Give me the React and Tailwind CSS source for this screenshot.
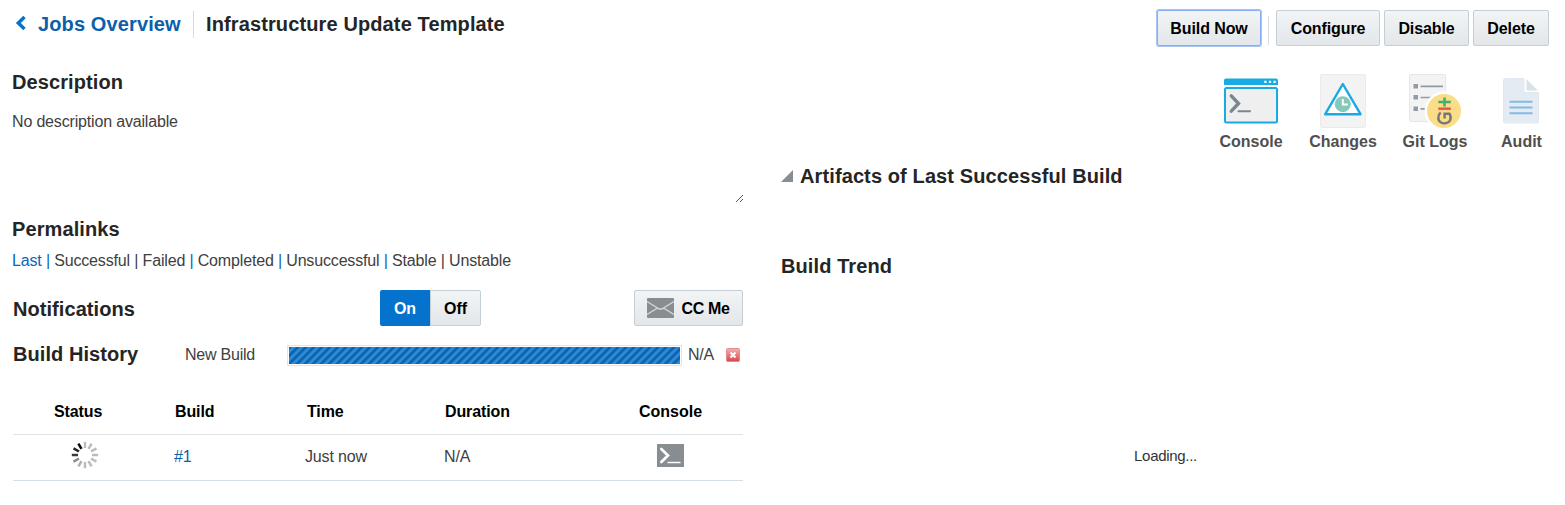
import React from "react";

const heading = "text-[20px] leading-[24px] font-bold text-[#252525] whitespace-nowrap";
const face =
  "h-[36px] flex items-center justify-center border bg-linear-to-b from-[#f2f4f5] to-[#e3e7ea] text-[16px] font-bold text-black whitespace-nowrap tracking-[-0.1px] pt-[2px]";
const edge = "border-[#c4ced7]";

function ConsoleIcon() {
  return (
    <svg width="54" height="46" viewBox="0 0 54 46">
      <path d="M2 0.500h50a2 2 0 0 1 2 2V7H0V2.500a2 2 0 0 1 2-2z" fill="#18aae2" />
      <path d="M40.300 2.700h2.200v2.200h-2.200zM44.900 2.700h2.200v2.200h-2.200zM49.500 2.700h2.200v2.200h-2.200z" fill="#fff" />
      <rect x="1" y="10" width="52" height="34.500" rx="1.500" fill="#efefef" stroke="#18aae2" strokeWidth="2" />
      <path d="M7.300 17.800l7.200 7.700-7.200 7.700" fill="none" stroke="#7b868f" strokeWidth="3.400" strokeLinecap="round" />
      <path d="M14.500 33.200h11.500" stroke="#7b868f" strokeWidth="2" strokeLinecap="round" />
    </svg>
  );
}

function ChangesIcon() {
  return (
    <svg width="46" height="54" viewBox="0 0 46 54">
      <rect x="0.500" y="0.500" width="45" height="53" rx="1.500" fill="#f3f3f3" stroke="#ebebeb" />
      <path d="M22.800 10L40.500 40.200H5.200z" fill="#fff" stroke="#18aae2" strokeWidth="2.400" strokeLinejoin="round" />
      <circle cx="22.800" cy="30.200" r="8" fill="#86c9bb" />
      <path d="M22.800 25v5.500h5" fill="none" stroke="#fff" strokeWidth="1.900" />
    </svg>
  );
}

function GitLogsIcon() {
  return (
    <svg width="53" height="55" viewBox="0 0 53 55">
      <rect x="0.500" y="0.500" width="36" height="47" rx="1" fill="#f3f3f3" stroke="#e6e6e6" />
      <path d="M4.500 10h4.500v4.500h-4.500zM4.500 21h4.500v4.500h-4.500zM4.500 32.500h4.500v4.500h-4.500z" fill="#929ba3" />
      <path d="M11.500 12.300h22.500M11.500 23.500h14M11.500 34.800h5" stroke="#929ba3" strokeWidth="1.700" />
      <circle cx="35" cy="37" r="19.500" fill="#fff" />
      <circle cx="35" cy="37" r="17" fill="#fadd86" />
      <path d="M35.500 23.500v9M29.300 28h12.500" stroke="#45af6c" strokeWidth="2.600" />
      <path d="M29.300 34.700h12.500" stroke="#ee5353" strokeWidth="2.500" />
      <path d="M31.700 38.500C28.600 41 28.300 46.500 32 48.500C35 50 39.500 49.500 41 46.500C42 44 41.800 41.500 40.500 39.700H35.600V44.500" fill="none" stroke="#767676" strokeWidth="2.400" />
    </svg>
  );
}

function AuditIcon() {
  return (
    <svg width="36" height="46" viewBox="0 0 36 46">
      <path d="M1.500 0.500H21V14.500H35.500V43.500a1.500 1.500 0 0 1-1.500 1.500H2a1.500 1.500 0 0 1-1.500-1.500V1.500z" fill="#e5ebf3" stroke="#dce4ee" strokeWidth="0.800" />
      <path d="M23.500 1L35 12.500H23.500z" fill="#d9e2eb" />
      <path d="M6.500 23.800h23M6.500 29.500h23M6.500 35.300h23" stroke="#82bbe6" strokeWidth="2" />
    </svg>
  );
}

const tools = [
  { label: "Console", icon: <ConsoleIcon />, box: "w-[64px] mr-[26px]", art: "h-[50px]" },
  { label: "Changes", icon: <ChangesIcon />, box: "w-[68px] mr-[26px]", art: "h-[54px]" },
  { label: "Git Logs", icon: <GitLogsIcon />, box: "w-[64px] mr-[34px]", art: "h-[54px]" },
  { label: "Audit", icon: <AuditIcon />, box: "w-[41px]", art: "h-[50px] pr-[2px]" },
];

const spokes = [
  "#bcbcbc", "#bcbcbc", "#bcbcbc", "#bcbcbc", "#bcbcbc", "#bcbcbc",
  "#bcbcbc", "#b0b0b0", "#8a8a8a", "#3a3a3a", "#222222", "#0a0a0a",
];

function Spinner() {
  return (
    <svg width="28" height="28" viewBox="-14 -14 28 28">
      {spokes.map((color, i) => (
        <path key={i} d="M0 -7V-13.200" stroke={color} strokeWidth="2.500" transform={`rotate(${i * 30})`} />
      ))}
    </svg>
  );
}

export default function App() {
  return (
    <div className="h-[505px] w-[1565px] overflow-hidden bg-white font-['Liberation_Sans',Arial,sans-serif] text-[16px] leading-[20px] text-[#404040]">
      <header className="flex h-[52px] justify-between pl-[15px] pr-[16px]">
        <div className="flex h-[48px] items-center">
          <svg width="12" height="16" viewBox="0 0 12 16" className="mr-[11px] -mt-[3px]">
            <path d="M9.500 2L3.300 8l6.200 6" fill="none" stroke="#0572ce" strokeWidth="3.400" />
          </svg>
          <a className="w-[155px] text-[20px] leading-[24px] font-bold whitespace-nowrap text-[#0c5fab] tracking-[0.12px]">Jobs Overview</a>
          <div className="h-[27px] w-px bg-[#d6dbdf]" />
          <h1 className={`${heading} ml-[12px] tracking-[0.12px]`}>Infrastructure Update Template</h1>
        </div>
        <div className="flex items-start pt-[10px]">
          <button className={`${face} w-[104px] rounded-[2px] border-[#87aef0] shadow-[0_0_0_1px_#a5c5f7]`}>Build Now</button>
          <div className="mx-[7px] mt-[6px] h-[29px] w-px bg-[#d6dfe6]" />
          <button className={`${face} ${edge} w-[104px] rounded-[2px]`}>Configure</button>
          <button className={`${face} ${edge} ml-[4px] w-[85px] rounded-[2px]`}>Disable</button>
          <button className={`${face} ${edge} ml-[4px] w-[76px] rounded-[2px]`}>Delete</button>
        </div>
      </header>

      <div className="flex pl-[12px] pr-[16px]">
        <main className="w-[731px]">
          <section className="h-[152px] pt-[18px]">
            <h2 className={`${heading} tracking-[0.1px]`}>Description</h2>
            <div className="mt-[18px] flex h-[92px] justify-between">
              <p className="tracking-[-0.17px]">No description available</p>
              <svg width="8" height="8" viewBox="0 0 8 8" shapeRendering="crispEdges" className="mt-[82px] self-start">
                <path d="M1 7h1v1h-1zM2 6h1v1h-1zM3 5h1v1h-1zM4 4h1v1h-1zM5 3h1v1h-1zM6 2h1v1h-1zM7 1h1v1h-1zM5 7h1v1h-1zM6 6h1v1h-1zM7 5h1v1h-1z" fill="#555" />
              </svg>
            </div>
          </section>

          <section className="h-[86px] pt-[13px]">
            <h2 className={`${heading} tracking-[0.1px]`}>Permalinks</h2>
            <p className="mt-[10px] whitespace-nowrap tracking-[-0.16px]">
              <a className="text-[#0c66b4]">Last</a> <span className="text-[#0c66b4]">|</span> Successful | Failed <span className="text-[#0c66b4]">|</span> Completed <span className="text-[#0c66b4]">|</span> Unsuccessful <span className="text-[#0c66b4]">|</span> Stable | Unstable
            </p>
          </section>

          <section className="flex h-[36px] items-center">
            <h2 className={`${heading} ml-px w-[367px] pt-[2px] tracking-[0.06px]`}>Notifications</h2>
            <div className="flex w-[254px]">
              <button className="h-[36px] w-[50px] rounded-l-[2px] bg-[#0572ce] pt-[2px] font-bold text-white">On</button>
              <button className={`${face} ${edge} w-[51px] rounded-r-[2px]`}>Off</button>
            </div>
            <button className={`${face} ${edge} w-[109px] gap-[7px] rounded-[2px]`}>
              <svg width="27" height="20" viewBox="0 0 27 20" className="-mt-[2px]">
                <rect width="27" height="20" rx="1" fill="#878d91" />
                <path d="M0 3.500L10.500 10L0 16.500M27 3.500L16.500 10L27 16.500M10 10l2 1h3l2-1" fill="none" stroke="#d4d8da" strokeWidth="1.300" />
              </svg>
              <span className="tracking-[-0.35px]">CC Me</span>
            </button>
          </section>

          <section className="mt-[18px] flex h-[22px] items-center">
            <h2 className={`${heading} -mt-[2px] ml-px w-[172px] tracking-[0.06px]`}>Build History</h2>
            <span className="w-[102px] tracking-[-0.22px]">New Build</span>
            <div className="h-[21px] w-[395px] border border-[#dfe4e7] p-px">
              <div className="h-full bg-[repeating-linear-gradient(135deg,#0a62ad_0px,#0a62ad_1.200px,#2f8ad6_2.800px,#2f8ad6_4.400px,#0a62ad_5.660px)]" />
            </div>
            <span className="ml-[6px] w-[38px] tracking-[-0.3px]">N/A</span>
            <svg width="14" height="14" viewBox="0 0 14 14">
              <defs>
                <linearGradient id="stop" x2="0" y2="1">
                  <stop offset="0" stopColor="#f0b4b4" />
                  <stop offset="1" stopColor="#dc4248" />
                </linearGradient>
              </defs>
              <rect x="0.500" y="0.500" width="13" height="13" rx="1" fill="url(#stop)" stroke="#e08c8e" />
              <path d="M4.500 4.500l5 5M9.500 4.500l-5 5" stroke="#fff" strokeWidth="2" />
            </svg>
          </section>

          <section className="ml-px mt-[23px]">
            <div className="grid h-[46px] grid-cols-[162px_132px_138px_194px_1fr] items-center border-b border-[#dfe4e7] font-bold tracking-[-0.12px] text-black">
              <span className="pl-[41px]">Status</span>
              <span>Build</span>
              <span>Time</span>
              <span>Duration</span>
              <span className="tracking-normal">Console</span>
            </div>
            <div className="grid h-[46px] grid-cols-[161px_131px_139px_213px_1fr] items-center border-b border-[#d4dfe8] pb-[2px] tracking-[-0.15px]">
              <span className="flex pb-[3px] pl-[58px]"><Spinner /></span>
              <a className="text-[#0c5fab]">#1</a>
              <span>Just now</span>
              <span>N/A</span>
              <svg width="27" height="23" viewBox="0 0 27 23" className="-mt-[2px]">
                <rect width="27" height="23" fill="#878d91" />
                <path d="M4.300 5l6.700 6.500-6.700 6.500" fill="none" stroke="#fff" strokeWidth="2.700" strokeLinecap="round" />
                <path d="M10.500 18.500h13" stroke="#fff" strokeWidth="1.500" />
              </svg>
            </div>
          </section>
        </main>

        <aside className="ml-[38px] flex-1">
          <nav className="flex h-[112px] justify-end pr-[7px] pt-[21px]">
            {tools.map((tool) => (
              <a key={tool.label} className={`flex flex-col items-center ${tool.box}`}>
                <span className="flex h-[55px] items-end justify-center">
                  <span className={tool.art}>{tool.icon}</span>
                </span>
                <span className="mt-[4px] whitespace-nowrap font-bold text-[#4f4f4f]">{tool.label}</span>
              </a>
            ))}
          </nav>
          <h2 className={`${heading} flex items-center tracking-[0.11px]`}>
            <svg width="12" height="12" viewBox="0 0 12 12" className="mr-[7px]">
              <path d="M12 0v12H0z" fill="#878d91" />
            </svg>
            Artifacts of Last Successful Build
          </h2>
          <h2 className={`${heading} mt-[66px] tracking-[0.1px]`}>Build Trend</h2>
          <p className="mt-[168px] pl-[1px] text-center text-[15px] tracking-[-0.3px] text-[#333]">Loading...</p>
        </aside>
      </div>
    </div>
  );
}
